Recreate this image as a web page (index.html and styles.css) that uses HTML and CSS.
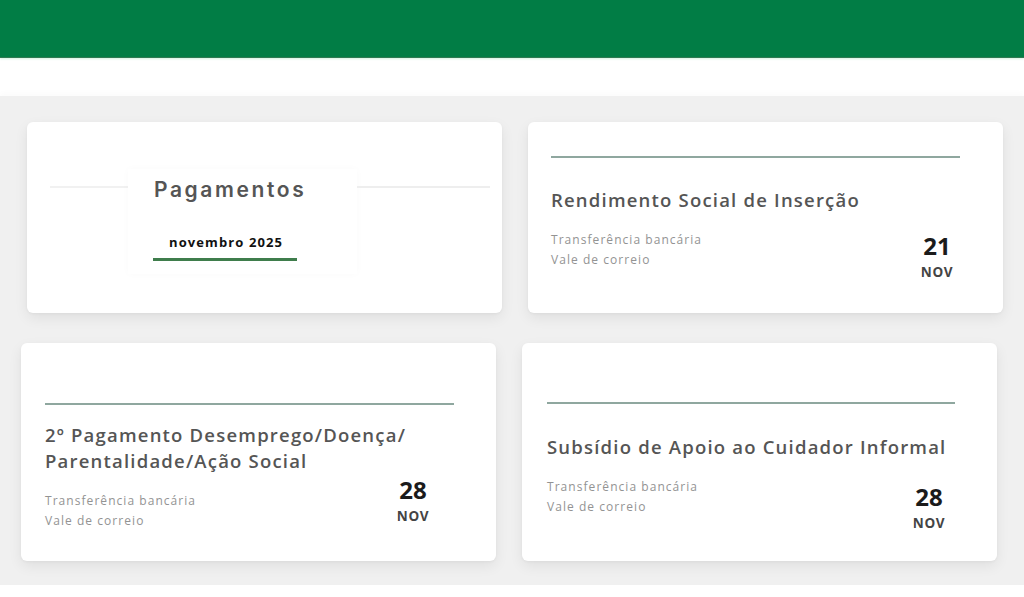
FILE: index.html
```html
<!DOCTYPE html>
<html lang="pt">
<head>
<meta charset="utf-8">
<title>Pagamentos</title>
<link rel="stylesheet" href="styles.css">
</head>
<body>
<header class="topbar"></header>
<main class="board">
  <div class="row row-top">
    <section class="card card-intro">
      <div class="intro-head">
        <span class="faint-line faint-left"></span>
        <div class="intro-box">
          <h1 class="intro-title">Pagamentos</h1>
          <div class="intro-month">novembro 2025</div>
          <div class="intro-underline"></div>
        </div>
        <span class="faint-line faint-right"></span>
      </div>
    </section>
    <section class="card card-a">
      <div class="rule"></div>
      <h2 class="title">Rendimento Social de Inserção</h2>
      <div class="info">
        <div class="methods">
          <div>Transferência bancária</div>
          <div>Vale de correio</div>
        </div>
        <div class="date date-a">
          <div class="day">21</div>
          <div class="month">NOV</div>
        </div>
      </div>
    </section>
  </div>
  <div class="row row-bottom">
    <section class="card card-b">
      <div class="rule"></div>
      <h2 class="title title-b">2º Pagamento Desemprego/Doença/<br>Parentalidade/Ação Social</h2>
      <div class="info">
        <div class="methods">
          <div>Transferência bancária</div>
          <div>Vale de correio</div>
        </div>
        <div class="date date-b">
          <div class="day">28</div>
          <div class="month">NOV</div>
        </div>
      </div>
    </section>
    <section class="card card-c">
      <div class="rule"></div>
      <h2 class="title">Subsídio de Apoio ao Cuidador Informal</h2>
      <div class="info">
        <div class="methods">
          <div>Transferência bancária</div>
          <div>Vale de correio</div>
        </div>
        <div class="date date-c">
          <div class="day">28</div>
          <div class="month">NOV</div>
        </div>
      </div>
    </section>
  </div>
</main>
</body>
</html>
```

FILE: styles.css
```css
* { box-sizing: border-box; }
html, body { margin: 0; padding: 0; }
body {
  width: 1024px;
  height: 597px;
  overflow: hidden;
  background: #ffffff;
  font-family: "Open Sans", "Noto Sans", sans-serif;
}
.topbar {
  height: 58px;
  background: #017d45;
  border-bottom: 1px solid #2f7a52;
  box-shadow: 0 1px 2px rgba(120, 220, 170, 0.35);
}
.board {
  margin-top: 38px;
  height: 489px;
  background: #f0f0f0;
  padding-top: 26px;
  box-shadow: 0 -3px 6px rgba(0,0,0,0.02);
}
.row {
  display: grid;
  grid-template-columns: 475px 475px;
  column-gap: 26px;
}
.row-top { padding-left: 27px; height: 191px; }
.row-bottom { padding-left: 21px; margin-top: 30px; height: 218px; }
.card {
  background: #ffffff;
  border-radius: 6px;
  box-shadow: 0 5px 14px rgba(0,0,0,0.07), 0 1px 3px rgba(0,0,0,0.04);
  padding: 34px 43px 0 23px;
}
.rule {
  height: 2px;
  background: #8fa79f;
}
.title {
  margin: 29px 0 0;
  font-size: 18.5px;
  line-height: 26px;
  font-weight: 600;
  color: #555555;
  letter-spacing: 1.2px;
  white-space: nowrap;
}
.info {
  margin-top: 17px;
  display: flex;
  justify-content: space-between;
  align-items: flex-start;
}
.methods {
  font-size: 12px;
  line-height: 20px;
  color: #939393;
  letter-spacing: 1.05px;
}
.date {
  width: 46px;
  text-align: center;
}
.day {
  font-size: 24px;
  line-height: 28px;
  font-weight: 700;
  color: #1b1b1b;
}
.month {
  margin-top: 4px;
  font-size: 13.5px;
  line-height: 16px;
  font-weight: 700;
  color: #444444;
  letter-spacing: 0.6px;
}
.date-a { margin-top: 2px; }

.card-b { padding: 60px 42px 0 24px; }
.title-b { margin-top: 17px; }
.date-b { margin-top: -15px; margin-right: 18px; }

.card-c { padding: 59px 42px 0 25px; }
.card-c .title { margin-top: 30px; }
.date-c { margin-top: 6px; margin-right: 3px; }

/* intro card */
.card-intro { padding: 47px 12px 0 23px; }
.intro-head {
  display: flex;
  align-items: flex-start;
}
.faint-line {
  margin-top: 17px;
  height: 2px;
  background: #f1f1f1;
}
.faint-left { width: 78px; }
.faint-right { flex: 1; background: #eeeeee; }
.intro-box {
  width: 229px;
  height: 105px;
  padding: 8px 0 0 26px;
  background: #ffffff;
  box-shadow: 0 0 8px rgba(0,0,0,0.025);
}
.intro-title {
  margin: 0;
  font-family: "Inter", "Noto Sans", sans-serif;
  font-size: 21px;
  line-height: 26px;
  font-weight: 600;
  color: #555555;
  letter-spacing: 2.6px;
}
.intro-month {
  margin: 30px 0 0 15px;
  font-size: 13px;
  line-height: 18px;
  font-weight: 700;
  color: #111111;
  letter-spacing: 1.1px;
}
.intro-underline {
  margin-top: 7px;
  margin-left: -1px;
  width: 144px;
  height: 3px;
  background: #3f7d4c;
}
```
